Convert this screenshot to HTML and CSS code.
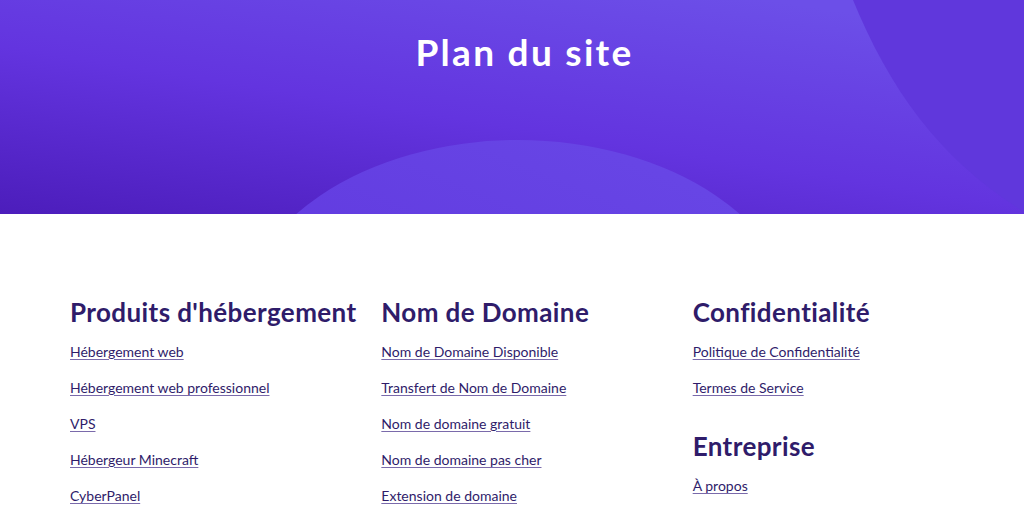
FILE: index.html
```html
<!DOCTYPE html>
<html lang="fr">
<head>
    <meta charset="UTF-8">
    <meta name="viewport" content="width=device-width, initial-scale=1.0">
    <title>Plan du site</title>
    <link rel="stylesheet" href="styles.css">
</head>
<body>
    <header class="hero">
        <svg class="hero-bg" viewBox="0 0 1024 214" preserveAspectRatio="none" aria-hidden="true">
            <defs>
                <linearGradient id="base" x1="0.75" y1="0" x2="0" y2="1">
                    <stop offset="0" stop-color="#6c4fe8"/>
                    <stop offset="0.5" stop-color="#6334df"/>
                    <stop offset="1" stop-color="#4c1dbb"/>
                </linearGradient>
                <linearGradient id="hill" x1="0.8" y1="0" x2="0.2" y2="1">
                    <stop offset="0" stop-color="#6847e6"/>
                    <stop offset="1" stop-color="#5c30da"/>
                </linearGradient>
            </defs>
            <rect width="1024" height="214" fill="url(#base)"/>
            <path d="M853,0 C890,90 940,160 1024,212 L1024,0 Z" fill="#6037dc"/>
            <ellipse cx="518" cy="330" rx="280" ry="190" fill="url(#hill)"/>
        </svg>
        <h1 class="hero-title">Plan du site</h1>
    </header>

    <main class="sitemap">
        <section class="col">
            <div class="group">
                <h2>Produits d'hébergement</h2>
                <ul>
                    <li><a href="#">Hébergement web</a></li>
                    <li><a href="#">Hébergement web professionnel</a></li>
                    <li><a href="#">VPS</a></li>
                    <li><a href="#">Hébergeur Minecraft</a></li>
                    <li><a href="#">CyberPanel</a></li>
                </ul>
            </div>
        </section>
        <section class="col">
            <div class="group">
                <h2>Nom de Domaine</h2>
                <ul>
                    <li><a href="#">Nom de Domaine Disponible</a></li>
                    <li><a href="#">Transfert de Nom de Domaine</a></li>
                    <li><a href="#">Nom de domaine gratuit</a></li>
                    <li><a href="#">Nom de domaine pas cher</a></li>
                    <li><a href="#">Extension de domaine</a></li>
                </ul>
            </div>
        </section>
        <section class="col">
            <div class="group">
                <h2>Confidentialité</h2>
                <ul>
                    <li><a href="#">Politique de Confidentialité</a></li>
                    <li><a href="#">Termes de Service</a></li>
                </ul>
            </div>
            <div class="group">
                <h2>Entreprise</h2>
                <ul>
                    <li><a href="#">À propos</a></li>
                </ul>
            </div>
        </section>
    </main>
</body>
</html>
```

FILE: styles.css
```css
body, html {
    margin: 0;
    font-family: Lato, "Noto Sans", sans-serif;
    background-color: #ffffff;
    color: #2f1c6a;
}
.hero {
    position: relative;
    height: 214px;
    overflow: hidden;
    display: flex;
    justify-content: center;
}
.hero-bg {
    position: absolute;
    top: 0;
    left: 0;
    width: 100%;
    height: 100%;
}
.hero-title {
    position: relative;
    margin: 0;
    padding: 30px 0 0 25px;
    font-size: 37px;
    line-height: 44px;
    font-weight: 700;
    letter-spacing: 2.3px;
    color: #ffffff;
}
.sitemap {
    display: grid;
    grid-template-columns: repeat(3, 1fr);
    padding: 81px 20px 0 70px;
}
.col {
    display: flex;
    flex-direction: column;
    gap: 32px;
}
.group h2 {
    margin: 0 0 12px;
    font-size: 26px;
    line-height: 34px;
    font-weight: 700;
    letter-spacing: 0.4px;
    color: #2f1c6a;
}
.group ul {
    list-style: none;
    margin: 0;
    padding: 0;
}
.group li {
    height: 36px;
    line-height: 20px;
}
.group li:last-child {
    height: 20px;
}
.group a {
    font-size: 14px;
    color: #2f1c6a;
    text-decoration: underline;
    text-decoration-color: #7a6aab;
    text-underline-offset: 2px;
}
```
